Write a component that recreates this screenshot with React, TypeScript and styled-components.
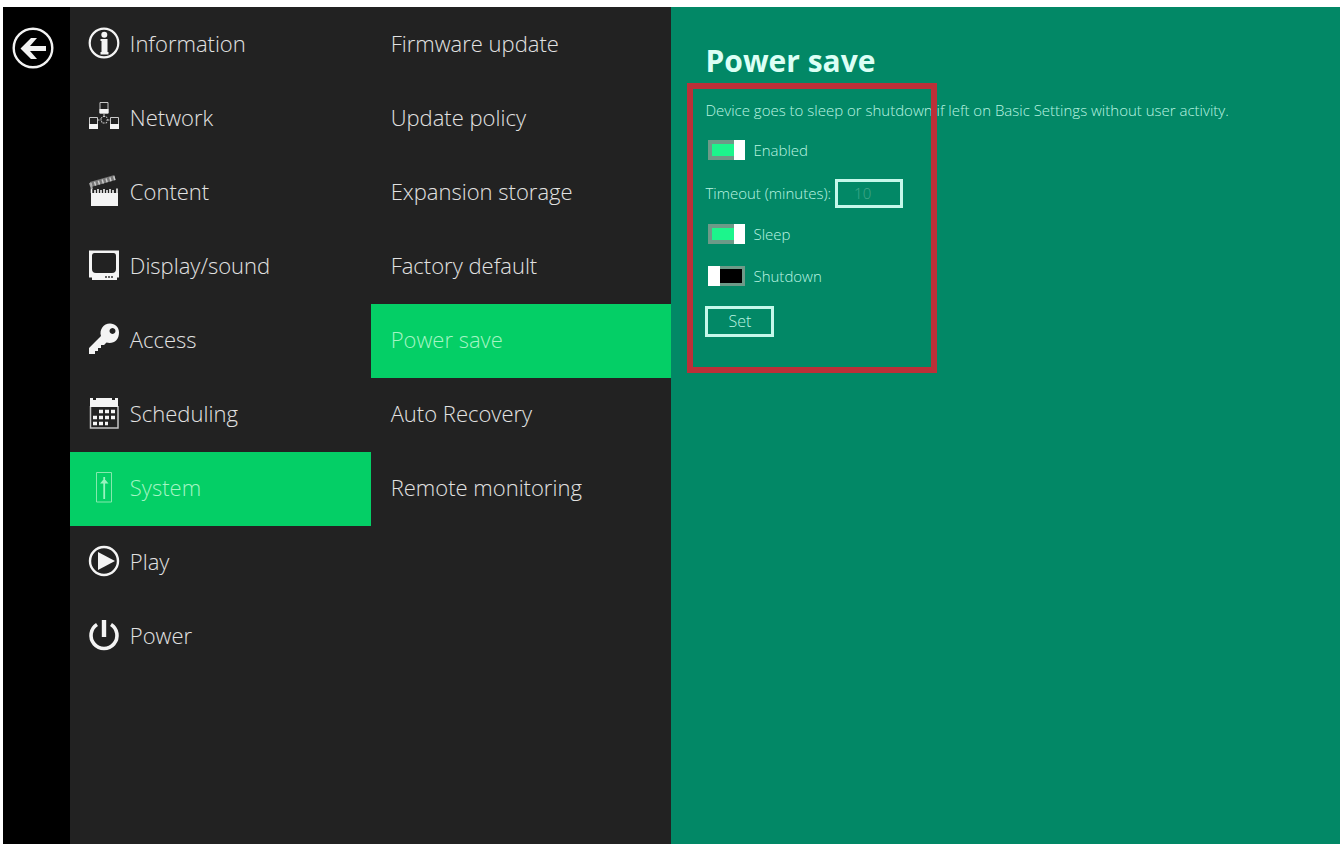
import React, { useState } from 'react';
import styled, { createGlobalStyle, css } from 'styled-components';

const GlobalStyle = createGlobalStyle`
  *, *::before, *::after { box-sizing: border-box; }
  html, body { margin: 0; background: #fff; }
  body { font-family: 'Open Sans', 'Noto Sans', sans-serif; font-weight: 300; color: #e4e4e4; }
  button, input { font: inherit; color: inherit; }
`;

const Page = styled.div`
  min-height: 100vh;
  padding: 7px 3px 1px;
  display: flex;
`;

const Shell = styled.div`
  flex: 1;
  display: grid;
  grid-template-columns: 5% 22.5% 22.5% 1fr;
`;

const Rail = styled.aside`
  background: #000;
  display: flex;
  justify-content: center;
  align-items: flex-start;
  padding: 20px 7px 0 0;
`;

const BackButton = styled.button`
  display: flex;
  padding: 0;
  border: 0;
  background: none;
  color: #f2f2f2;
  cursor: pointer;
`;

const Menu = styled.nav`
  display: flex;
  flex-direction: column;
  padding-top: 1px;
  background: #222;
`;

const MenuItem = styled.a<{ $active?: boolean; $indent: number }>`
  display: flex;
  align-items: center;
  gap: 10px;
  height: 74px;
  padding: 0 0 5px ${(p) => p.$indent}px;
  font-size: 22px;
  line-height: 30px;
  color: #e2e2e2;
  text-decoration: none;
  white-space: nowrap;
  ${(p) =>
    p.$active &&
    css`
      background: #04cf66;
      color: #a5f5c4;
    `}
`;

const IconSlot = styled.span`
  display: flex;
  flex: none;
  color: #f4f4f4;
`;

const Panel = styled.main`
  position: relative;
  padding: 35px 34px;
  background: #028866;
  color: #bcf4e2;
`;

const Title = styled.h1`
  margin: 0;
  font-size: 30px;
  line-height: 38px;
  font-weight: 700;
  color: #dcfff5;
`;

const Description = styled.p`
  margin: 20px 0 0;
  font-size: 15px;
  line-height: 20px;
`;

const Form = styled.form`
  display: flex;
  flex-direction: column;
  align-items: flex-start;
  padding-top: 10px;
`;

const Row = styled.label`
  display: flex;
  align-items: center;
  height: 42px;
  font-size: 15px;
  line-height: 20px;
`;

const SwitchRow = styled(Row)`
  gap: 8px;
  padding: 0 0 2px 3px;
`;

const Switch = styled.input`
  appearance: none;
  display: block;
  width: 37px;
  height: 20px;
  margin: 0;
  background:
    linear-gradient(#fff, #fff) left / 12px 100% no-repeat,
    linear-gradient(#000, #000) 12px 3px / 22px 14px no-repeat,
    #6d9a88;
  cursor: pointer;
  &:checked {
    background:
      linear-gradient(#fff, #fff) right / 11px 100% no-repeat,
      linear-gradient(#1cf58c, #1cf58c) 4px 4px / 22px 12px no-repeat,
      #6d9a88;
  }
`;

const MinutesInput = styled.input`
  width: 68px;
  height: 29px;
  margin-left: 4px;
  padding: 0 10px 0 16px;
  border: 3px solid #c5f8ea;
  border-radius: 0;
  background: transparent;
  color: #43a98b;
  font-size: 15px;
`;

const SetButton = styled.button`
  width: 69px;
  height: 31px;
  margin-top: 8px;
  padding: 0 0 2px;
  border: 3px solid #c5f8ea;
  background: transparent;
  font-size: 16px;
  line-height: 20px;
  cursor: pointer;
`;

const Highlight = styled.div`
  position: absolute;
  top: 76px;
  left: 16px;
  width: 250px;
  height: 290px;
  border: 6px solid #bb3038;
  pointer-events: none;
`;

function Icon({ size = 32, children }: { size?: number; children: React.ReactNode }) {
  return (
    <svg width={size} height={size} viewBox="0 0 32 32" fill="none" stroke="none" aria-hidden="true">
      {children}
    </svg>
  );
}

const BackIcon = () => (
  <svg width="42" height="42" viewBox="0 0 42 42" fill="none" aria-hidden="true">
    <circle cx="21" cy="21" r="19.3" stroke="currentColor" strokeWidth="2.4" />
    <path d="M8.500 21.500L19 11H25L18 19H34V24H18L25 32H19Z" fill="currentColor" />
  </svg>
);

const InfoIcon = () => (
  <Icon>
    <circle cx="16" cy="16" r="14.3" stroke="currentColor" strokeWidth="2.2" />
    <circle cx="16.3" cy="7.8" r="3" fill="currentColor" />
    <path d="M12.500 12H19.500V25H20.500V27.500H12.500V25H13.500V14H12.500Z" fill="currentColor" />
  </Icon>
);

const NetworkIcon = () => (
  <Icon>
    <g stroke="#c8c8c8" strokeWidth="1">
      <path d="M12 1.500H20V12H12Z M1.500 16.500H9.500V27.500H1.500Z M22.500 16.500H30.500V27.500H22.500Z" />
      <path d="M13 17.500L14.500 15.500H18L19.500 17.500L18.500 22H14Z M9.500 19H13 M19.500 19H22.500 M16 13V15" strokeDasharray="2 1" />
    </g>
    <path d="M11.500 8H20.500V12.500H11.500Z M1 23H10V28H1Z M22 23H31V28H22Z" fill="currentColor" />
  </Icon>
);

const ContentIcon = () => (
  <Icon>
    <path d="M3 18H30V31H3Z" fill="currentColor" />
    <path d="M3.500 18V13.500 M7 18V15 M10 18V14 M13 18V15 M16 18V14 M19 18V15 M22 18V14 M25 18V15 M29 18V13.500" stroke="currentColor" strokeWidth="1.6" />
    <path d="M2.500 9.500L27 2.500" stroke="#777" strokeWidth="5" />
    <path d="M2.500 10L27 3" stroke="#ccc" strokeWidth="4" strokeDasharray="1.500 2.500" />
    <path d="M2 8L4 14" stroke="#aaa" strokeWidth="2" />
  </Icon>
);

const DisplayIcon = () => (
  <Icon>
    <path fillRule="evenodd" d="M1 1.500H31V28.500H29V31H4V28.500H1Z M6.500 4Q4 4 4 7V20Q4 24 8 24H24Q28 24 28 20V7Q28 4 25.500 4Z" fill="currentColor" />
    <path d="M17 28H26" stroke="#333" strokeWidth="1.4" strokeDasharray="2 1" />
  </Icon>
);

const KeyIcon = () => (
  <Icon>
    <path fillRule="evenodd" d="M22 0.500C27 0.500 31 4 31 9.500C31 16 27 20 21.500 20L18.500 19.500L16 22H13V25H10V28H7V31H1V25L13 13C11 7 15.500 0.500 22 0.500Z M24.500 5A3 3 0 1 0 24.510 5Z" fill="currentColor" />
  </Icon>
);

const CalendarIcon = () => (
  <Icon>
    <path d="M2.500 9V31H30V9" stroke="#c4c4c4" strokeWidth="1.5" />
    <path d="M2 1H5V3H8V1H24V3H27V1H30V10H2Z" fill="currentColor" />
    <path d="M11 14.500H27 M5 20.500H27 M5 26.500H20" stroke="currentColor" strokeWidth="3.6" strokeDasharray="4 2" />
  </Icon>
);

const SystemIcon = () => (
  <Icon>
    <path d="M8.500 1.500H23.500V31H8.500Z" stroke="#85e9ad" strokeWidth="1" />
    <path d="M16.200 6V28" stroke="#9af3bf" strokeWidth="1.8" />
    <path d="M12 12.500L15 9H17.500L20.500 12.500Z" fill="#9af3bf" />
  </Icon>
);

const PlayIcon = () => (
  <Icon>
    <circle cx="16" cy="16" r="14" stroke="currentColor" strokeWidth="2.4" />
    <path d="M10 7L27 16L10 25Z" fill="currentColor" />
  </Icon>
);

const PowerIcon = () => (
  <Icon>
    <path d="M9 5.500A13 13 0 1 0 23 5.500" stroke="currentColor" strokeWidth="3.6" />
    <path d="M16 1V18" stroke="currentColor" strokeWidth="4.4" />
  </Icon>
);

const sections = [
  { label: 'Information', icon: <InfoIcon /> },
  { label: 'Network', icon: <NetworkIcon /> },
  { label: 'Content', icon: <ContentIcon /> },
  { label: 'Display/sound', icon: <DisplayIcon /> },
  { label: 'Access', icon: <KeyIcon /> },
  { label: 'Scheduling', icon: <CalendarIcon /> },
  { label: 'System', icon: <SystemIcon /> },
  { label: 'Play', icon: <PlayIcon /> },
  { label: 'Power', icon: <PowerIcon /> },
];

const systemPages = [
  'Firmware update',
  'Update policy',
  'Expansion storage',
  'Factory default',
  'Power save',
  'Auto Recovery',
  'Remote monitoring',
];

export default function App() {
  const [enabled, setEnabled] = useState(true);
  const [sleep, setSleep] = useState(true);
  const [shutdown, setShutdown] = useState(false);

  return (
    <>
      <GlobalStyle />
      <Page>
        <Shell>
          <Rail>
            <BackButton type="button" aria-label="Back">
              <BackIcon />
            </BackButton>
          </Rail>
          <Menu aria-label="Settings">
            {sections.map((s) => (
              <MenuItem key={s.label} href="#" $indent={18} $active={s.label === 'System'}>
                <IconSlot>{s.icon}</IconSlot>
                {s.label}
              </MenuItem>
            ))}
          </Menu>
          <Menu aria-label="System">
            {systemPages.map((label) => (
              <MenuItem key={label} href="#" $indent={20} $active={label === 'Power save'}>
                {label}
              </MenuItem>
            ))}
          </Menu>
          <Panel>
            <Title>Power save</Title>
            <Description>
              Device goes to sleep or shutdown if left on Basic Settings without user activity.
            </Description>
            <Form onSubmit={(e) => e.preventDefault()}>
              <SwitchRow>
                <Switch type="checkbox" checked={enabled} onChange={() => setEnabled(!enabled)} />
                Enabled
              </SwitchRow>
              <Row>
                Timeout (minutes):
                <MinutesInput type="text" inputMode="numeric" defaultValue="10" />
              </Row>
              <SwitchRow>
                <Switch type="checkbox" checked={sleep} onChange={() => setSleep(!sleep)} />
                Sleep
              </SwitchRow>
              <SwitchRow>
                <Switch type="checkbox" checked={shutdown} onChange={() => setShutdown(!shutdown)} />
                Shutdown
              </SwitchRow>
              <SetButton type="submit">Set</SetButton>
            </Form>
            <Highlight />
          </Panel>
        </Shell>
      </Page>
    </>
  );
}
